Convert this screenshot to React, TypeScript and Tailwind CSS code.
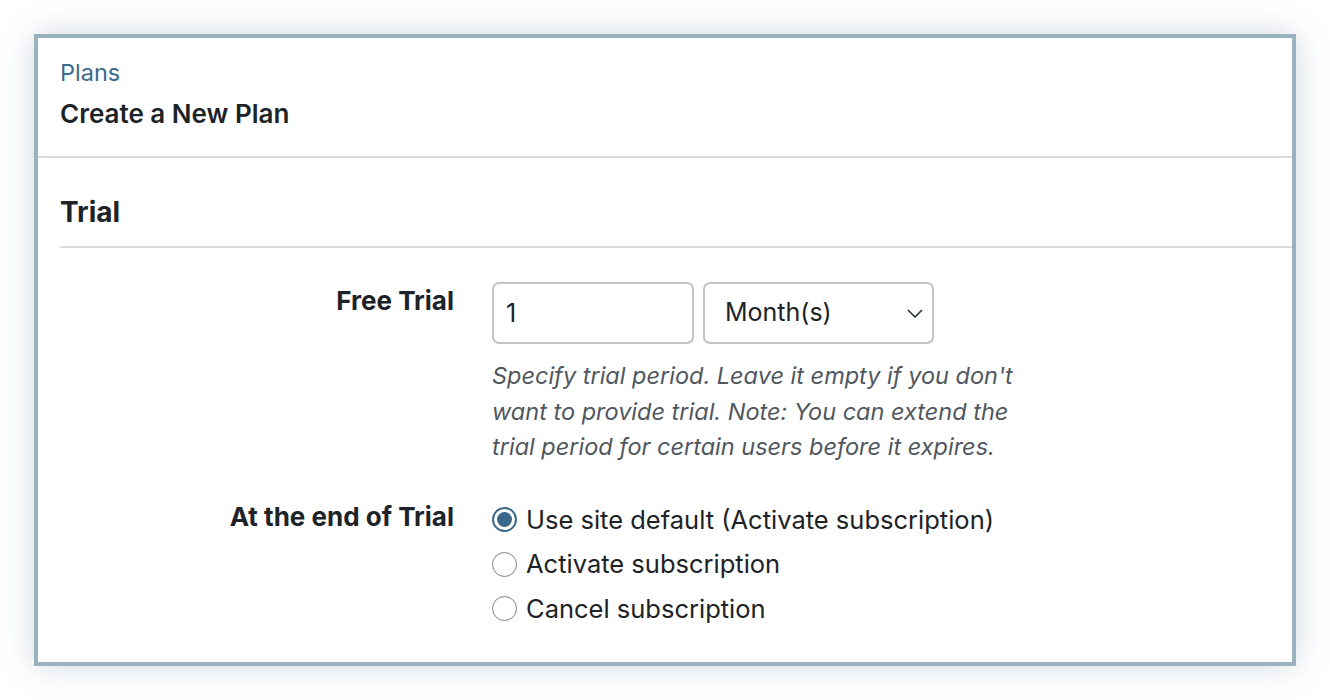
const options = [
  { id: 'default', label: 'Use site default (Activate subscription)', checked: true },
  { id: 'activate', label: 'Activate subscription', checked: false },
  { id: 'cancel', label: 'Cancel subscription', checked: false },
];

function Radio({ checked }: { checked: boolean }) {
  return (
    <span
      className={`flex h-[25px] w-[25px] shrink-0 items-center justify-center rounded-full bg-white ${
        checked ? 'border-2 border-[#3b6789]' : 'border-[1.5px] border-[#7e8287]'
      }`}
    >
      {checked && <span className="h-[15px] w-[15px] rounded-full bg-[#3b6789]" />}
    </span>
  );
}

export default function App() {
  return (
    <div className="min-h-screen bg-white pl-[34px] pt-[34px] font-['Inter',sans-serif] text-[#1d2327]">
      <div className="h-[632px] w-[1262px] border-4 border-[#9ab1bf] bg-white shadow-[0_0_30px_rgba(120,145,165,0.35)]">
        {/* Header */}
        <div className="h-[120px] border-b-2 border-[#dcdcde] pl-[22px] pt-[20px]">
          <a className="block text-[23.5px] leading-[30px] text-[#3c6a8c]">Plans</a>
          <h1 className="mt-[10px] text-[26px] font-semibold leading-[32px]">Create a New Plan</h1>
        </div>

        {/* Trial section */}
        <div className="pl-[22px]">
          <h2 className="border-b-2 border-[#dcdcde] pt-[36px] pb-[16px] text-[28px] font-bold leading-[36px]">Trial</h2>

          <div className="flex pt-[34px]">
            <div className="w-[394px] pt-[4px] text-right text-[26px] font-bold leading-[30px]">Free Trial</div>
            <div className="ml-[38px]">
              <div className="flex gap-[9px]">
                <input
                  readOnly
                  value="1"
                  className="h-[62px] w-[202px] rounded-[7px] border-2 border-[#c3c4c7] px-[12px] text-[25px] text-[#1d2327] outline-none"
                />
                <div className="relative">
                  <select
                    defaultValue="month"
                    className="h-[62px] w-[231px] appearance-none rounded-[7px] border-2 border-[#c3c4c7] bg-white pl-[20px] text-[25px] text-[#1d2327] outline-none"
                  >
                    <option value="month">Month(s)</option>
                  </select>
                  <svg
                    className="pointer-events-none absolute right-[11px] top-[27px] h-[9px] w-[16px]"
                    viewBox="0 0 16 9"
                    fill="none"
                  >
                    <polyline points="1,1 8,8 15,1" stroke="#2c3338" strokeWidth="1.6" />
                  </svg>
                </div>
              </div>
              <p className="mt-[14px] w-[540px] text-[23.5px] italic leading-[35.5px] text-[#50575e]">
                Specify trial period. Leave it empty if you don't want to provide trial. Note: You can extend the trial
                period for certain users before it expires.
              </p>
            </div>
          </div>

          <div className="flex pt-[37px]">
            <div className="w-[394px] text-right text-[26px] font-bold leading-[30px]">At the end of Trial</div>
            <div className="ml-[38px] flex flex-col gap-[14.5px] pt-[3px]">
              {options.map((o) => (
                <label key={o.id} className="flex h-[30px] items-center gap-[9px] text-[25.5px] leading-[30px]">
                  <Radio checked={o.checked} />
                  {o.label}
                </label>
              ))}
            </div>
          </div>
        </div>
      </div>
    </div>
  );
}
